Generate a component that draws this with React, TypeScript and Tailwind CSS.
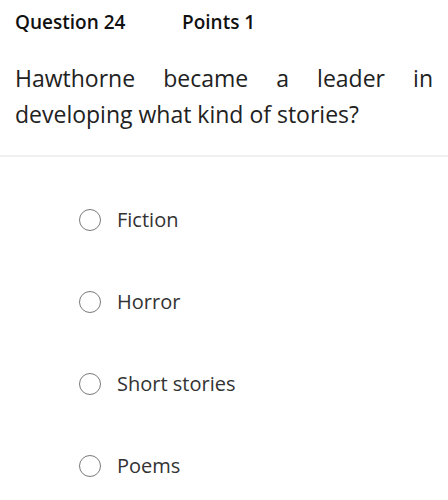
const options = ["Fiction", "Horror", "Short stories", "Poems"];

function Radio() {
  return <span className="block h-[22px] w-[22px] shrink-0 rounded-full border-[1.5px] border-[#7a7a7a] bg-white" />;
}

export default function App() {
  return (
    <div className="min-h-[500px] w-[448px] bg-white font-['Open_Sans',sans-serif]">
      <div className="flex px-[15px] pt-[10px] text-[19px] font-semibold leading-[24px] text-[#111]">
        <span className="w-[167px]">Question 24</span>
        <span>Points 1</span>
      </div>
      <div className="border-b-2 border-[#efefef] px-[15px] pb-[23px] pt-[26px]">
        <p className="text-justify text-[23px] leading-[36px] text-[#222]">
          Hawthorne became a leader in developing what kind of stories?
        </p>
      </div>
      <ul className="mt-[49px] flex flex-col gap-[54px] pl-[79px]">
        {options.map((opt) => (
          <li key={opt} className="flex h-[28px] items-center gap-[16px]">
            <Radio />
            <span className="text-[20px] leading-[28px] text-[#333]">{opt}</span>
          </li>
        ))}
      </ul>
    </div>
  );
}
